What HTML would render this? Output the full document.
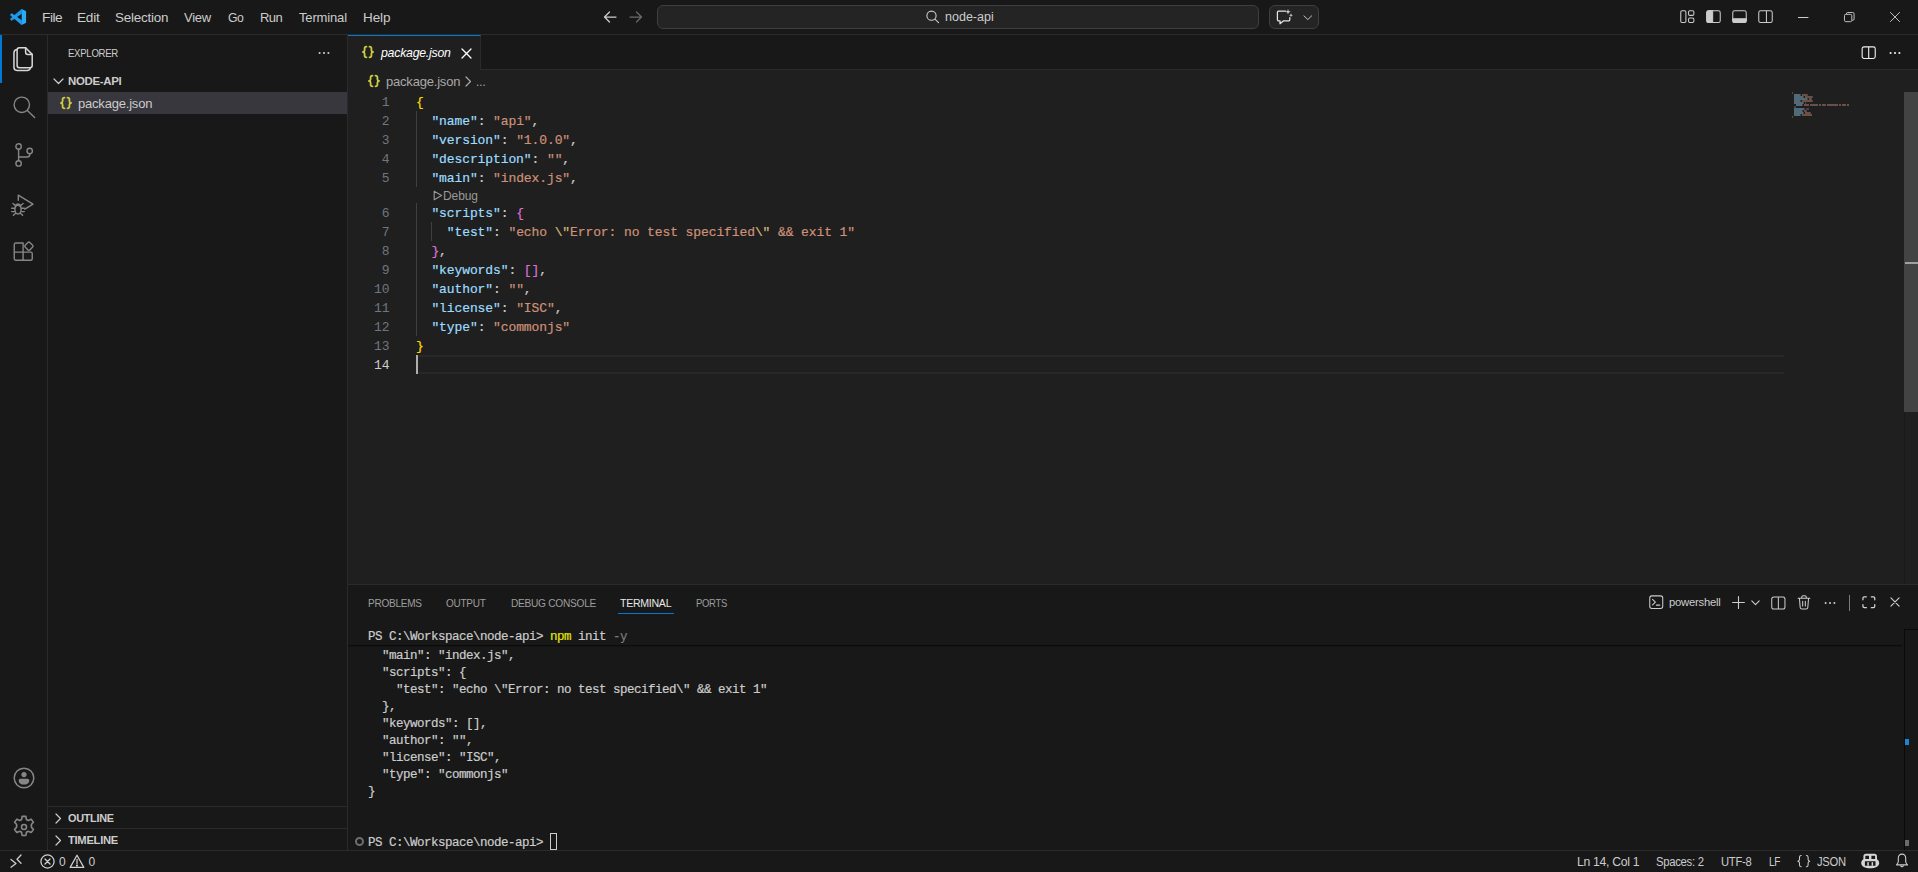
<!DOCTYPE html>
<html>
<head>
<meta charset="utf-8">
<title>package.json - node-api - Visual Studio Code</title>
<style>
*{box-sizing:border-box;margin:0;padding:0}
html,body{width:1918px;height:872px;overflow:hidden;background:#181818;}
body{font-family:"Liberation Sans",sans-serif;font-size:13px;color:#cccccc;position:relative;-webkit-font-smoothing:antialiased;}
.abs{position:absolute}
svg{display:block;overflow:visible}
.t{position:absolute;white-space:pre;line-height:1}

/* regions */
#titlebar{left:0;top:0;width:1918px;height:35px;background:#181818;border-bottom:1px solid #2b2b2b}
#activity{left:0;top:35px;width:48px;height:815px;background:#181818;border-right:1px solid #2b2b2b}
#sidebar{left:48px;top:35px;width:300px;height:815px;background:#181818;border-right:1px solid #2b2b2b}
#tabs{left:348px;top:35px;width:1570px;height:35px;background:#181818;border-bottom:1px solid #2b2b2b}
#editor{left:348px;top:70px;width:1570px;height:514px;background:#1f1f1f}
#panel{left:348px;top:584px;width:1570px;height:266px;background:#181818;border-top:1px solid #2b2b2b}
#status{left:0;top:850px;width:1918px;height:22px;background:#181818;border-top:1px solid #2b2b2b}

.menu{top:11px;font-size:13px;color:#cccccc}
/* code */
.mono{font-family:"Liberation Mono",monospace}
.code{font-family:"Liberation Mono",monospace;font-size:13px;letter-spacing:-0.1px;white-space:pre;line-height:19px;height:19px;position:absolute;left:416px;margin-top:1px;color:#cccccc}
.ln{font-family:"Liberation Mono",monospace;font-size:13px;letter-spacing:-0.1px;position:absolute;width:42px;left:347.5px;margin-top:1px;text-align:right;line-height:19px;height:19px;color:#6e7681}
.code,.term{-webkit-text-stroke:0.2px currentColor}
.k{color:#9cdcfe}.s{color:#ce9178}.y{color:#ffd700}.p{color:#da70d6}.e{color:#d7ba7d}
.term{font-family:"Liberation Mono",monospace;font-size:12.5px;letter-spacing:-0.5px;margin-top:2px;white-space:pre;line-height:17px;height:17px;position:absolute;left:368px;color:#cccccc}
</style>
</head>
<body>
<div id="titlebar" class="abs">
<!-- vscode logo -->
<svg class="abs" style="left:10px;top:9px" width="16.2" height="16" viewBox="0 0 16.2 16">
<path d="M11.800 -0.200L0.200 9.700Q-0.100 10.100 0.300 10.500L1.300 11.600Q1.700 11.900 2.100 11.600L11.800 4.700Z" fill="#1b95e8"/>
<path d="M11.800 16.200L0.200 6.300Q-0.100 5.900 0.300 5.500L1.300 4.400Q1.700 4.100 2.100 4.400L11.800 11.300Z" fill="#1f9cf0"/>
<path d="M11.700 0L15.700 1.900Q16.100 2.100 16.100 2.600V13.400Q16.100 13.900 15.700 14.100L11.700 16Z" fill="#2aaaf5"/>
</svg>
<span id="mFile" class="t menu" style="left:41.94px;letter-spacing:-0.45px;transform-origin:0 50%;transform:scaleX(1.0556)">File</span>
<span id="mEdit" class="t menu" style="left:76.95px;letter-spacing:-0.2px;transform-origin:0 50%;transform:scaleX(1.0476)">Edit</span>
<span id="mSel" class="t menu" style="left:114.96px;letter-spacing:-0.2px;transform-origin:0 50%;transform:scaleX(1.03)">Selection</span>
<span id="mView" class="t menu" style="left:184px;letter-spacing:-0.25px">View</span>
<span id="mGo" class="t menu" style="left:228.00px;letter-spacing:-0.5px;transform-origin:0 50%;transform:scaleX(0.9412)">Go</span>
<span id="mRun" class="t menu" style="left:260px;letter-spacing:-0.6px">Run</span>
<span id="mTerm" class="t menu" style="left:299px;letter-spacing:-0.15px">Terminal</span>
<span id="mHelp" class="t menu" style="left:362.96px;letter-spacing:-0.1px;transform-origin:0 50%;transform:scaleX(1.0400)">Help</span>
<!-- nav arrows -->
<svg class="abs" style="left:602px;top:9px" width="16" height="16" viewBox="0 0 16 16" fill="none" stroke="#cccccc" stroke-width="1.25" stroke-linecap="round" stroke-linejoin="round"><path d="M14 8H2.5M7.5 3L2.5 8l5 5"/></svg>
<svg class="abs" style="left:628px;top:9px" width="16" height="16" viewBox="0 0 16 16" fill="none" stroke="#6a6a6a" stroke-width="1.25" stroke-linecap="round" stroke-linejoin="round"><path d="M2 8h11.5M8.5 3l5 5-5 5"/></svg>
<!-- command center -->
<div class="abs" style="left:657px;top:5px;width:602px;height:24px;border:1px solid #3f3f3f;border-radius:6px;background:#242424"></div>
<svg class="abs" style="left:925px;top:9px" width="16" height="16" viewBox="0 0 16 16" fill="none" stroke="#cccccc" stroke-width="1.1" stroke-linecap="round"><circle cx="6.5" cy="6.7" r="4.6"/><path d="M9.9 10.1L13.6 13.6"/></svg>
<span id="cc" class="t" style="left:945.00px;top:11px;font-size:12px;color:#cccccc;letter-spacing:0px;transform-origin:0 50%;transform:scaleX(1.0435)">node-api</span>
<!-- copilot chat button -->
<div class="abs" style="left:1269px;top:5px;width:50px;height:24px;border:1px solid #3f3f3f;border-radius:6px;background:#242424"></div>
<svg class="abs" style="left:1276px;top:8px" width="18" height="18" viewBox="0 0 18 18" fill="none" stroke="#e4e4e4" stroke-width="1.25" stroke-linejoin="round" stroke-linecap="round"><path d="M9.5 3.2H2.6a1.2 1.2 0 0 0-1.2 1.2v7.2a1.2 1.2 0 0 0 1.2 1.2H4v3l3.6-3h5a1.2 1.2 0 0 0 1.2-1.2V9.6"/><path d="M12 1l.7 2 2 .7-2 .7-.7 2-.7-2-2-.7 2-.7z" fill="#d0d0d0" stroke="none"/><path d="M15 5.2l.55 1.45L17 7.2l-1.45.55L15 9.2l-.55-1.45L13 7.2l1.45-.55z" fill="#d0d0d0" stroke="none"/></svg>
<svg class="abs" style="left:1302.5px;top:14.5px" width="9.6" height="6" viewBox="0 0 11 7" fill="none" stroke="#cccccc" stroke-width="1.1" stroke-linecap="round" stroke-linejoin="round"><path d="M1 1l4.5 4.3L10 1"/></svg>
<!-- layout controls -->
<svg class="abs" style="left:1679.6px;top:9.3px" width="15.2" height="15.4" viewBox="0 0 16 16" fill="none" stroke="#cccccc" stroke-width="1.1"><rect x="0.8" y="1.8" width="5.4" height="12.4" rx="1.3"/><rect x="9" y="1.8" width="5.6" height="4.8" rx="1.3"/><rect x="9" y="9.4" width="5.6" height="4.8" rx="1.3"/></svg>
<svg class="abs" style="left:1705.6px;top:9.3px" width="15.2" height="15.4" viewBox="0 0 16 16" fill="none" stroke="#cccccc" stroke-width="1.1"><rect x="0.8" y="1.8" width="14.2" height="12.4" rx="2"/><path d="M0.8 3.8a2 2 0 0 1 2-2H7v12.4H2.8a2 2 0 0 1-2-2z" fill="#cccccc"/></svg>
<svg class="abs" style="left:1731.6px;top:9.3px" width="15.2" height="15.4" viewBox="0 0 16 16" fill="none" stroke="#cccccc" stroke-width="1.1"><rect x="0.8" y="1.8" width="14.2" height="12.4" rx="2"/><path d="M0.8 10.200H15v2a2 2 0 0 1-2 2H2.800a2 2 0 0 1-2-2z" fill="#cccccc"/></svg>
<svg class="abs" style="left:1757.6px;top:9.3px" width="15.2" height="15.4" viewBox="0 0 16 16" fill="none" stroke="#cccccc" stroke-width="1.1"><rect x="0.8" y="1.8" width="14.2" height="12.4" rx="2"/><path d="M8.9 1.8v12.4"/></svg>
<!-- window controls -->
<svg class="abs" style="left:1798px;top:12px" width="11" height="11" viewBox="0 0 11 11" fill="none" stroke="#cccccc" stroke-width="1"><path d="M0 5.5h10.4"/></svg>
<svg class="abs" style="left:1843.5px;top:12px" width="11" height="10.2" viewBox="0 0 12 11" fill="none" stroke="#cccccc" stroke-width="1"><rect x="0.5" y="2.5" width="8" height="8" rx="1.5"/><path d="M2.6 2.4V2a1.5 1.5 0 0 1 1.5-1.5H9.5A1.5 1.5 0 0 1 11 2v5.5A1.5 1.5 0 0 1 9.5 9H8.7"/></svg>
<svg class="abs" style="left:1890px;top:12px" width="10.2" height="10.2" viewBox="0 0 11 11" fill="none" stroke="#cccccc" stroke-width="1"><path d="M0.2 0.2l10.4 10.4M10.6 0.2L0.2 10.6"/></svg>
</div>
<div id="activity" class="abs">
<div class="abs" style="left:0;top:0;width:2px;height:48px;background:#0078d4"></div>
<!-- explorer (files) -->
<svg class="abs" style="left:12px;top:11px" width="24" height="26" viewBox="0 0 24 26" fill="none" stroke="#d7d7d7" stroke-width="1.5" stroke-linejoin="round" stroke-linecap="round"><path d="M7.300 1.800H13.600L20.200 8.400V19.500a2.200 2.200 0 0 1-2.200 2.200H7.300a2.200 2.200 0 0 1-2.200-2.200V4a2.200 2.200 0 0 1 2.200-2.200z"/><path d="M13.600 1.800V6.200a2.200 2.200 0 0 0 2.200 2.200H20.200"/><path d="M4.900 3.500C3.200 3.700 1.950 5 1.950 6.800V21.300a3.100 3.100 0 0 0 3.100 3.100H15.200c1.700 0 2.900-1 3.100-2.500"/></svg>
<!-- search -->
<svg class="abs" style="left:12px;top:60px" width="24" height="24" viewBox="0 0 24 24" fill="none" stroke="#868686" stroke-width="1.4" stroke-linecap="round"><circle cx="9.800" cy="9.800" r="7.700"/><path d="M15.400 15.400L22.600 22.400"/></svg>
<!-- source control -->
<svg class="abs" style="left:12px;top:106px" width="24" height="28" viewBox="0 0 24 28" fill="none" stroke="#868686" stroke-width="1.4" stroke-linecap="round"><circle cx="6.600" cy="5.500" r="2.700"/><circle cx="6.600" cy="22.400" r="2.700"/><circle cx="17.700" cy="10" r="2.700"/><path d="M6.600 8.200v11.500"/><path d="M17.700 12.700v.8a2.500 2.500 0 0 1-2.500 2.500H6.600"/></svg>
<!-- run and debug -->
<svg class="abs" style="left:10px;top:157px" width="26" height="26" viewBox="0 0 26 26" fill="none" stroke="#868686" stroke-width="1.400" stroke-linecap="round" stroke-linejoin="round"><path d="M8.3 8.2V3.2L23 12.2l-8.2 5"/><ellipse cx="8" cy="17.600" rx="3.100" ry="4.400"/><path d="M5.2 14.2a2.9 2.9 0 0 1 5.6 0"/><path d="M4.5 16.3H1.7M4.5 19.6H1.7M11.5 16.3h2.8M11.5 19.6h2.8M5 13.3L3 11.5M11 13.3l2-1.8M5.4 21.4L3.4 23.3M10.6 21.4l2 1.9"/></svg>
<!-- extensions -->
<svg class="abs" style="left:12px;top:204px" width="24" height="24" viewBox="0 0 24 24" fill="none" stroke="#868686" stroke-width="1.4" stroke-linejoin="round"><path d="M2.250 5.500a1.500 1.500 0 0 1 1.500-1.500H11.100V13.100H18.750a1.500 1.500 0 0 1 1.500 1.500V19.750a1.500 1.500 0 0 1-1.500 1.500H3.750a1.500 1.500 0 0 1-1.500-1.500z"/><path d="M2.250 13.100H11.100V21.250"/><rect x="13.600" y="3.900" width="6.600" height="6.600" rx="1.300" transform="rotate(45 16.900 7.200)"/></svg>
<!-- account -->
<svg class="abs" style="left:12px;top:731px" width="24" height="24" viewBox="0 0 24 24" fill="none" stroke="#868686" stroke-width="1.5"><circle cx="12" cy="12" r="9.8"/><circle cx="12" cy="8.6" r="2.6" fill="#868686" stroke="none"/><path d="M6.7 14.4c0-1 .8-1.7 1.7-1.7h7.2c1 0 1.7.8 1.7 1.7 0 2.6-2.3 4.2-5.3 4.2s-5.3-1.6-5.3-4.2z" fill="#868686" stroke="none"/></svg>
<!-- gear -->
<svg class="abs" style="left:11px;top:779px" width="26" height="26" viewBox="0 0 24 24" fill="none" stroke="#868686" stroke-width="1.5" stroke-linejoin="round"><circle cx="12" cy="12" r="2.3"/><path d="M10.3 2.2h3.4l.5 2.9 1.7.9 2.7-1.2 2.1 2.7-1.9 2.2v2.4l1.9 2.3-2.1 2.7-2.7-1.2-1.7 1-.5 2.9h-3.4l-.5-2.9-1.7-1-2.7 1.2-2.1-2.7 1.9-2.3v-2.4L3.300 7.500l2.100-2.700 2.700 1.200 1.700-.9z"/></svg>
</div>
<div id="sidebar" class="abs">
<span id="sExp" class="t" style="left:20.11px;top:13px;font-size:11px;color:#cccccc;letter-spacing:-0.35px;transform-origin:0 50%;transform:scaleX(0.8754)">EXPLORER</span>
<svg class="abs" style="left:270px;top:16px" width="12" height="4" viewBox="0 0 12 4" fill="#cccccc"><circle cx="1.6" cy="2" r="1.05"/><circle cx="6" cy="2" r="1.05"/><circle cx="10.4" cy="2" r="1.05"/></svg>
<!-- NODE-API header -->
<svg class="abs" style="left:5px;top:43px" width="11" height="7" viewBox="0 0 11 7" fill="none" stroke="#cccccc" stroke-width="1.2" stroke-linecap="round" stroke-linejoin="round"><path d="M1 1l4.5 4.5L10 1"/></svg>
<span id="sNode" class="t" style="left:20.00px;top:41px;font-size:11px;font-weight:700;color:#cccccc;letter-spacing:-0.3px;transform-origin:0 50%;transform:scaleX(1.0392)">NODE-API</span>
<!-- selected file row -->
<div class="abs" style="left:0;top:57px;width:299px;height:22px;background:#37373d"></div>
<svg class="abs" style="left:12.2px;top:62.3px" width="12" height="12" viewBox="0 0 12 12" fill="none" stroke="#cbcb41" stroke-width="1.8" stroke-linecap="round" stroke-linejoin="round"><path d="M4.5 0.700C3 0.700 2.600 1.300 2.600 2.500V4.200C2.600 5.200 2.200 5.800 1 6C2.200 6.200 2.600 6.800 2.600 7.800V9.500C2.600 10.700 3 11.300 4.500 11.300"/><path d="M7.500 0.700C9 0.700 9.400 1.300 9.400 2.500V4.200C9.400 5.200 9.800 5.800 11 6C9.800 6.200 9.400 6.800 9.400 7.800V9.500C9.400 10.700 9 11.300 7.500 11.300"/></svg>
<span id="sPkg" class="t" style="left:30px;top:62px;font-size:13px;color:#cccccc;letter-spacing:-0.2px">package.json</span>
<!-- outline / timeline -->
<div class="abs" style="left:0;top:771px;width:299px;height:1px;background:#2b2b2b"></div>
<svg class="abs" style="left:7px;top:777.5px" width="7" height="11" viewBox="0 0 7 11" fill="none" stroke="#cccccc" stroke-width="1.2" stroke-linecap="round" stroke-linejoin="round"><path d="M1 1l4.5 4.5L1 10"/></svg>
<span id="sOut" class="t" style="left:20.00px;top:778px;font-size:11px;font-weight:700;color:#cccccc;letter-spacing:-0.3px;transform-origin:0 50%;transform:scaleX(0.99)">OUTLINE</span>
<div class="abs" style="left:0;top:793px;width:299px;height:1px;background:#2b2b2b"></div>
<svg class="abs" style="left:7px;top:799.5px" width="7" height="11" viewBox="0 0 7 11" fill="none" stroke="#cccccc" stroke-width="1.2" stroke-linecap="round" stroke-linejoin="round"><path d="M1 1l4.5 4.5L1 10"/></svg>
<span id="sTime" class="t" style="left:20.00px;top:800px;font-size:11px;font-weight:700;color:#cccccc;letter-spacing:-0.3px;transform-origin:0 50%;transform:scaleX(1.0204)">TIMELINE</span>
</div>
<div id="tabs" class="abs">
<div class="abs" style="left:0;top:0;width:133px;height:35px;background:#1f1f1f;border-top:1px solid #0078d4;border-right:1px solid #2b2b2b"></div>
<svg class="abs" style="left:14.3px;top:11.1px" width="12" height="12" viewBox="0 0 12 12" fill="none" stroke="#cbcb41" stroke-width="1.8" stroke-linecap="round" stroke-linejoin="round"><path d="M4.5 0.700C3 0.700 2.600 1.300 2.600 2.500V4.200C2.600 5.200 2.200 5.800 1 6C2.200 6.200 2.600 6.800 2.600 7.800V9.500C2.600 10.700 3 11.300 4.500 11.300"/><path d="M7.500 0.700C9 0.700 9.400 1.300 9.400 2.500V4.200C9.400 5.200 9.800 5.800 11 6C9.800 6.200 9.400 6.800 9.400 7.800V9.500C9.400 10.700 9 11.300 7.500 11.300"/></svg>
<span id="tPkg" class="t" style="left:32.95px;top:11px;font-size:13px;font-style:italic;color:#ffffff;letter-spacing:-0.25px;transform-origin:0 50%;transform:scaleX(0.9467)">package.json</span>
<svg class="abs" style="left:113px;top:13px" width="11" height="11" viewBox="0 0 11 11" fill="none" stroke="#ffffff" stroke-width="1.3" stroke-linecap="round"><path d="M1 1l9 9M10 1l-9 9"/></svg>
<!-- editor actions -->
<svg class="abs" style="left:1513.2px;top:10.2px" width="15.4" height="15.4" viewBox="0 0 16 16" fill="none" stroke="#f0f0f0" stroke-width="1.15"><rect x="1.2" y="2" width="13.6" height="12" rx="2"/><path d="M8 2v12"/></svg>
<svg class="abs" style="left:1541px;top:16px" width="12" height="4" viewBox="0 0 12 4" fill="#f0f0f0"><circle cx="1.6" cy="2" r="1.05"/><circle cx="6" cy="2" r="1.05"/><circle cx="10.4" cy="2" r="1.05"/></svg>
</div>
<div id="editor" class="abs"></div>
<svg class="abs" style="left:368px;top:75.2px" width="12" height="12" viewBox="0 0 12 12" fill="none" stroke="#cbcb41" stroke-width="1.8" stroke-linecap="round" stroke-linejoin="round"><path d="M4.5 0.700C3 0.700 2.600 1.300 2.600 2.500V4.200C2.600 5.200 2.200 5.800 1 6C2.200 6.200 2.600 6.800 2.600 7.800V9.500C2.600 10.700 3 11.300 4.500 11.300"/><path d="M7.500 0.700C9 0.700 9.400 1.300 9.400 2.500V4.200C9.400 5.200 9.800 5.800 11 6C9.800 6.200 9.400 6.800 9.400 7.800V9.500C9.400 10.700 9 11.300 7.500 11.300"/></svg>
<span id="bPkg" class="t" style="left:386px;top:75px;font-size:13px;color:#a9a9a9;letter-spacing:-0.2px">package.json</span>
<svg class="abs" style="left:465px;top:76px" width="7" height="11" viewBox="0 0 7 11" fill="none" stroke="#a9a9a9" stroke-width="1.2" stroke-linecap="round" stroke-linejoin="round"><path d="M1 1l4.5 4.5L1 10"/></svg>
<span id="bDots" class="t" style="left:476.11px;top:75px;font-size:13px;color:#a9a9a9;letter-spacing:0px;transform-origin:0 50%;transform:scaleX(0.8889)">...</span>
<div class="abs" style="left:416px;top:355px;width:1368px;height:19px;border-top:2px solid #282828;border-bottom:2px solid #282828"></div>
<div class="abs" style="left:416px;top:111px;width:1px;height:76px;background:#404040"></div>
<div class="abs" style="left:416px;top:203px;width:1px;height:133px;background:#404040"></div>
<div class="abs" style="left:431px;top:222px;width:1px;height:19px;background:#404040"></div>
<div class="ln" style="top:92px">1</div>
<div class="code" style="top:92px"><span class="y">{</span></div>
<div class="ln" style="top:111px">2</div>
<div class="code" style="top:111px">  <span class="k">"name"</span>: <span class="s">"api"</span>,</div>
<div class="ln" style="top:130px">3</div>
<div class="code" style="top:130px">  <span class="k">"version"</span>: <span class="s">"1.0.0"</span>,</div>
<div class="ln" style="top:149px">4</div>
<div class="code" style="top:149px">  <span class="k">"description"</span>: <span class="s">""</span>,</div>
<div class="ln" style="top:168px">5</div>
<div class="code" style="top:168px">  <span class="k">"main"</span>: <span class="s">"index.js"</span>,</div>
<div class="ln" style="top:203px">6</div>
<div class="code" style="top:203px">  <span class="k">"scripts"</span>: <span class="p">{</span></div>
<div class="ln" style="top:222px">7</div>
<div class="code" style="top:222px">    <span class="k">"test"</span>: <span class="s">"echo <span class="e">\"</span>Error: no test specified<span class="e">\"</span> &amp;&amp; exit 1"</span></div>
<div class="ln" style="top:241px">8</div>
<div class="code" style="top:241px">  <span class="p">}</span>,</div>
<div class="ln" style="top:260px">9</div>
<div class="code" style="top:260px">  <span class="k">"keywords"</span>: <span class="p">[]</span>,</div>
<div class="ln" style="top:279px">10</div>
<div class="code" style="top:279px">  <span class="k">"author"</span>: <span class="s">""</span>,</div>
<div class="ln" style="top:298px">11</div>
<div class="code" style="top:298px">  <span class="k">"license"</span>: <span class="s">"ISC"</span>,</div>
<div class="ln" style="top:317px">12</div>
<div class="code" style="top:317px">  <span class="k">"type"</span>: <span class="s">"commonjs"</span></div>
<div class="ln" style="top:336px">13</div>
<div class="code" style="top:336px"><span class="y">}</span></div>
<div class="ln" style="top:355px;color:#cccccc">14</div>
<svg class="abs" style="left:432.5px;top:189.700px" width="10" height="11" viewBox="0 0 10 11" fill="none" stroke="#999999" stroke-width="1.1" stroke-linejoin="round"><path d="M1.2 1.2v8.6L8.6 5.5z"/></svg>
<span id="cDebug" class="t" style="left:443px;top:190px;font-size:12px;color:#999999;letter-spacing:-0.1px">Debug</span>
<div class="abs" style="left:416px;top:355px;width:2px;height:19px;background:#aeafad"></div>
<!-- minimap -->
<div class="abs" style="left:1792px;top:92px;width:1px;height:2px;background:rgba(255,215,0,0.28)"></div>
<div class="abs" style="left:1794px;top:94px;width:6px;height:2px;background:rgba(156,220,254,0.40)"></div>
<div class="abs" style="left:1800px;top:94px;width:1px;height:2px;background:rgba(204,204,204,0.22)"></div>
<div class="abs" style="left:1802px;top:94px;width:5px;height:2px;background:rgba(206,145,120,0.43)"></div>
<div class="abs" style="left:1807px;top:94px;width:1px;height:2px;background:rgba(204,204,204,0.22)"></div>
<div class="abs" style="left:1794px;top:96px;width:9px;height:2px;background:rgba(156,220,254,0.40)"></div>
<div class="abs" style="left:1803px;top:96px;width:1px;height:2px;background:rgba(204,204,204,0.22)"></div>
<div class="abs" style="left:1805px;top:96px;width:7px;height:2px;background:rgba(206,145,120,0.43)"></div>
<div class="abs" style="left:1812px;top:96px;width:1px;height:2px;background:rgba(204,204,204,0.22)"></div>
<div class="abs" style="left:1794px;top:98px;width:13px;height:2px;background:rgba(156,220,254,0.40)"></div>
<div class="abs" style="left:1807px;top:98px;width:1px;height:2px;background:rgba(204,204,204,0.22)"></div>
<div class="abs" style="left:1809px;top:98px;width:2px;height:2px;background:rgba(206,145,120,0.43)"></div>
<div class="abs" style="left:1811px;top:98px;width:1px;height:2px;background:rgba(204,204,204,0.22)"></div>
<div class="abs" style="left:1794px;top:100px;width:6px;height:2px;background:rgba(156,220,254,0.40)"></div>
<div class="abs" style="left:1800px;top:100px;width:1px;height:2px;background:rgba(204,204,204,0.22)"></div>
<div class="abs" style="left:1802px;top:100px;width:10px;height:2px;background:rgba(206,145,120,0.43)"></div>
<div class="abs" style="left:1812px;top:100px;width:1px;height:2px;background:rgba(204,204,204,0.22)"></div>
<div class="abs" style="left:1794px;top:102px;width:9px;height:2px;background:rgba(156,220,254,0.40)"></div>
<div class="abs" style="left:1803px;top:102px;width:1px;height:2px;background:rgba(204,204,204,0.22)"></div>
<div class="abs" style="left:1805px;top:102px;width:1px;height:2px;background:rgba(218,112,214,0.30)"></div>
<div class="abs" style="left:1796px;top:104px;width:6px;height:2px;background:rgba(156,220,254,0.40)"></div>
<div class="abs" style="left:1802px;top:104px;width:1px;height:2px;background:rgba(204,204,204,0.22)"></div>
<div class="abs" style="left:1804px;top:104px;width:5px;height:2px;background:rgba(206,145,120,0.43)"></div>
<div class="abs" style="left:1810px;top:104px;width:8px;height:2px;background:rgba(206,145,120,0.43)"></div>
<div class="abs" style="left:1819px;top:104px;width:2px;height:2px;background:rgba(206,145,120,0.43)"></div>
<div class="abs" style="left:1822px;top:104px;width:4px;height:2px;background:rgba(206,145,120,0.43)"></div>
<div class="abs" style="left:1827px;top:104px;width:11px;height:2px;background:rgba(206,145,120,0.43)"></div>
<div class="abs" style="left:1839px;top:104px;width:2px;height:2px;background:rgba(206,145,120,0.43)"></div>
<div class="abs" style="left:1842px;top:104px;width:4px;height:2px;background:rgba(206,145,120,0.43)"></div>
<div class="abs" style="left:1847px;top:104px;width:2px;height:2px;background:rgba(206,145,120,0.43)"></div>
<div class="abs" style="left:1794px;top:106px;width:1px;height:2px;background:rgba(218,112,214,0.30)"></div>
<div class="abs" style="left:1795px;top:106px;width:1px;height:2px;background:rgba(204,204,204,0.22)"></div>
<div class="abs" style="left:1794px;top:108px;width:10px;height:2px;background:rgba(156,220,254,0.40)"></div>
<div class="abs" style="left:1804px;top:108px;width:1px;height:2px;background:rgba(204,204,204,0.22)"></div>
<div class="abs" style="left:1806px;top:108px;width:2px;height:2px;background:rgba(218,112,214,0.30)"></div>
<div class="abs" style="left:1808px;top:108px;width:1px;height:2px;background:rgba(204,204,204,0.22)"></div>
<div class="abs" style="left:1794px;top:110px;width:8px;height:2px;background:rgba(156,220,254,0.40)"></div>
<div class="abs" style="left:1802px;top:110px;width:1px;height:2px;background:rgba(204,204,204,0.22)"></div>
<div class="abs" style="left:1804px;top:110px;width:2px;height:2px;background:rgba(206,145,120,0.43)"></div>
<div class="abs" style="left:1806px;top:110px;width:1px;height:2px;background:rgba(204,204,204,0.22)"></div>
<div class="abs" style="left:1794px;top:112px;width:9px;height:2px;background:rgba(156,220,254,0.40)"></div>
<div class="abs" style="left:1803px;top:112px;width:1px;height:2px;background:rgba(204,204,204,0.22)"></div>
<div class="abs" style="left:1805px;top:112px;width:5px;height:2px;background:rgba(206,145,120,0.43)"></div>
<div class="abs" style="left:1810px;top:112px;width:1px;height:2px;background:rgba(204,204,204,0.22)"></div>
<div class="abs" style="left:1794px;top:114px;width:6px;height:2px;background:rgba(156,220,254,0.40)"></div>
<div class="abs" style="left:1800px;top:114px;width:1px;height:2px;background:rgba(204,204,204,0.22)"></div>
<div class="abs" style="left:1802px;top:114px;width:10px;height:2px;background:rgba(206,145,120,0.43)"></div>
<div class="abs" style="left:1792px;top:116px;width:1px;height:2px;background:rgba(255,215,0,0.28)"></div>
<div class="abs" style="left:1904px;top:92px;width:14px;height:320px;background:#434343"></div>
<div class="abs" style="left:1904px;top:412px;width:1px;height:172px;background:#191919"></div>
<div class="abs" style="left:1905px;top:262px;width:13px;height:2px;background:#a0a0a0"></div>
<div id="panel" class="abs"></div>
<span id="pProb" class="t" style="left:368.07px;top:598px;font-size:11px;color:#9d9d9d;letter-spacing:-0.3px;transform-origin:0 50%;transform:scaleX(0.9141)">PROBLEMS</span>
<span id="pOut" class="t" style="left:446.00px;top:598px;font-size:11px;color:#9d9d9d;letter-spacing:-0.3px;transform-origin:0 50%;transform:scaleX(0.9091)">OUTPUT</span>
<span id="pDbg" class="t" style="left:511.07px;top:598px;font-size:11px;color:#9d9d9d;letter-spacing:-0.3px;transform-origin:0 50%;transform:scaleX(0.9232)">DEBUG CONSOLE</span>
<span id="pTerm" class="t" style="left:620.00px;top:598px;font-size:11px;color:#e7e7e7;letter-spacing:-0.3px;transform-origin:0 50%;transform:scaleX(0.9630)">TERMINAL</span>
<span id="pPorts" class="t" style="left:696.11px;top:598px;font-size:11px;color:#9d9d9d;letter-spacing:-0.3px;transform-origin:0 50%;transform:scaleX(0.8580)">PORTS</span>
<div class="abs" style="left:618px;top:613px;width:56px;height:1px;background:#0078d4"></div>
<svg class="abs" style="left:1649px;top:595px" width="14.5" height="14.3" viewBox="0 0 15 15" fill="none" stroke="#cccccc" stroke-width="1.1" stroke-linecap="round" stroke-linejoin="round"><rect x="0.7" y="0.9" width="13.6" height="13.2" rx="2.2"/><path d="M3.6 4.6l3 2.9-3 2.9M7.6 10.6h3.6"/></svg>
<span id="pPwsh" class="t" style="left:1669.00px;top:597px;font-size:11.5px;color:#cccccc;letter-spacing:-0.25px;transform-origin:0 50%;transform:scaleX(0.9808)">powershell</span>
<svg class="abs" style="left:1732px;top:596px" width="13" height="13" viewBox="0 0 13 13" fill="none" stroke="#cccccc" stroke-width="1.1" stroke-linecap="round"><path d="M6.5 0.6v11.8M0.6 6.5h11.8"/></svg>
<svg class="abs" style="left:1751px;top:600px" width="9" height="6" viewBox="0 0 9 6" fill="none" stroke="#cccccc" stroke-width="1.1" stroke-linecap="round" stroke-linejoin="round"><path d="M0.8 0.9l3.7 3.7L8.2 0.9"/></svg>
<svg class="abs" style="left:1770.5px;top:596px" width="14.9" height="14" viewBox="0 0 16 15" fill="none" stroke="#cccccc" stroke-width="1.1"><rect x="0.8" y="1" width="14.2" height="13" rx="2.2"/><path d="M7.9 1v13"/></svg>
<svg class="abs" style="left:1797px;top:595px" width="14" height="15.2" viewBox="0 0 14 16" fill="none" stroke="#cccccc" stroke-width="1.1" stroke-linecap="round" stroke-linejoin="round"><path d="M0.8 3.4h12.4M4.6 3.2V2.4a1.6 1.6 0 0 1 1.6-1.600h1.600a1.600 1.600 0 0 1 1.600 1.600v.8M2.2 3.600l.8 9.600a1.800 1.800 0 0 0 1.800 1.600h4.400a1.800 1.800 0 0 0 1.800-1.600l.8-9.600M5.600 6.600v5M8.400 6.600v5"/></svg>
<svg class="abs" style="left:1824px;top:601px" width="12" height="4" viewBox="0 0 12 4" fill="#cccccc"><circle cx="1.6" cy="2" r="1"/><circle cx="6" cy="2" r="1"/><circle cx="10.4" cy="2" r="1"/></svg>
<div class="abs" style="left:1849px;top:595px;width:1px;height:16px;background:#7a7a7a"></div>
<svg class="abs" style="left:1862.3px;top:595.8px" width="13.7" height="12.4" viewBox="0 0 14 13" fill="none" stroke="#d4d4d4" stroke-width="1.3" stroke-linecap="round" stroke-linejoin="round"><path d="M0.8 4V2.2a1.400 1.400 0 0 1 1.400-1.400H4.400M9.600 0.800h2.200a1.400 1.400 0 0 1 1.400 1.400V4M13.200 9v1.800a1.400 1.400 0 0 1-1.400 1.400H9.600M4.400 12.200H2.200a1.400 1.400 0 0 1-1.400-1.400V9"/></svg>
<svg class="abs" style="left:1890px;top:597.4px" width="10" height="10" viewBox="0 0 11 11" fill="none" stroke="#cccccc" stroke-width="1.3" stroke-linecap="round"><path d="M1 1l9 9M10 1l-9 9"/></svg>
<div class="term" style="top:627px">PS C:\Workspace\node-api&gt; <span style="color:#e5e510">npm</span> init <span style="color:#7a7a7a">-y</span></div>
<div class="abs" style="left:348px;top:645px;width:1554px;height:1px;background:#0c0c0c"></div>
<div class="abs" style="left:348px;top:646px;width:1554px;height:1px;background:#141414"></div>
<div class="term" style="top:646px">  "main": "index.js",</div>
<div class="term" style="top:663px">  "scripts": {</div>
<div class="term" style="top:680px">    "test": "echo \"Error: no test specified\" &amp;&amp; exit 1"</div>
<div class="term" style="top:697px">  },</div>
<div class="term" style="top:714px">  "keywords": [],</div>
<div class="term" style="top:731px">  "author": "",</div>
<div class="term" style="top:748px">  "license": "ISC",</div>
<div class="term" style="top:765px">  "type": "commonjs"</div>
<div class="term" style="top:782px">}</div>
<div class="term" style="top:833px">PS C:\Workspace\node-api&gt; </div>
<div class="abs" style="left:550px;top:833px;width:7px;height:17px;border:1px solid #cccccc"></div>
<div class="abs" style="left:354.5px;top:836.5px;width:9px;height:9px;border:2.3px solid #6e6e6e;border-radius:50%"></div>
<div class="abs" style="left:1904px;top:629px;width:1px;height:221px;background:#0a0a0a"></div>
<div class="abs" style="left:1904px;top:629px;width:14px;height:1px;background:#0a0a0a"></div>
<div class="abs" style="left:1905px;top:739px;width:4px;height:6px;background:#1a85d6"></div>
<div class="abs" style="left:1905px;top:840px;width:4px;height:6px;background:#6b6b6b"></div>
<div id="status" class="abs"></div>
<svg class="abs" style="left:10px;top:854px" width="12" height="14" viewBox="0 0 12 14" fill="none" stroke="#cccccc" stroke-width="1.300" stroke-linecap="round" stroke-linejoin="round"><path d="M1 5.400L6 9.400L1 13.200M11 1L7 5.200L11 9.200"/></svg>
<svg class="abs" style="left:40px;top:854px" width="15" height="15" viewBox="0 0 15 15" fill="none" stroke="#d0d0d0" stroke-width="1.25" stroke-linecap="round"><circle cx="7.500" cy="7.500" r="6.600"/><path d="M5 5l5 5M10 5l-5 5"/></svg>
<span id="st0a" class="t" style="left:59px;top:856px;font-size:12px;color:#cccccc;letter-spacing:0px">0</span>
<svg class="abs" style="left:69px;top:854px" width="16" height="15" viewBox="0 0 16 15" fill="none" stroke="#d0d0d0" stroke-width="1.25" stroke-linecap="round" stroke-linejoin="round"><path d="M8 1.200L14.800 13.400H1.200z"/><path d="M8 5.400v4.200"/><circle cx="8" cy="11.500" r="0.500" fill="#cccccc"/></svg>
<span id="st0b" class="t" style="left:88.5px;top:856px;font-size:12px;color:#cccccc;letter-spacing:0px">0</span>
<span id="stLn" class="t" style="left:1576.98px;top:856px;font-size:12px;color:#cccccc;letter-spacing:-0.3px;transform-origin:0 50%;transform:scaleX(1.0167)">Ln 14, Col 1</span>
<span id="stSp" class="t" style="left:1656.00px;top:856px;font-size:12px;color:#cccccc;letter-spacing:-0.3px;transform-origin:0 50%;transform:scaleX(0.9412)">Spaces: 2</span>
<span id="stUtf" class="t" style="left:1721.03px;top:856px;font-size:12px;color:#cccccc;letter-spacing:-0.3px;transform-origin:0 50%;transform:scaleX(0.9385)">UTF-8</span>
<span id="stLf" class="t" style="left:1769.07px;top:856px;font-size:12px;color:#cccccc;letter-spacing:-0.3px;transform-origin:0 50%;transform:scaleX(0.8403)">LF</span>
<svg class="abs" style="left:1796.5px;top:854.8px" width="13.600" height="12.400" viewBox="0 0 13.600 12.400" fill="none" stroke="#cccccc" stroke-width="1.050" stroke-linecap="round" stroke-linejoin="round"><path d="M4.200 0.600C2.900 0.600 2.500 1.200 2.500 2.300V4.500C2.500 5.500 2.100 6 0.800 6.200C2.100 6.400 2.500 6.900 2.500 7.900V10.100C2.500 11.200 2.900 11.800 4.200 11.800"/><path d="M9.400 0.600C10.700 0.600 11.100 1.200 11.100 2.300V4.500C11.100 5.500 11.500 6 12.800 6.200C11.500 6.400 11.100 6.900 11.100 7.900V10.100C11.100 11.200 10.700 11.800 9.400 11.800"/></svg>
<span id="stJson" class="t" style="left:1817.00px;top:856px;font-size:12px;color:#cccccc;letter-spacing:-0.3px;transform-origin:0 50%;transform:scaleX(0.9355)">JSON</span>
<svg class="abs" style="left:1861px;top:853px" width="18.4" height="16" viewBox="0 0 18.4 16"><path fill="#d6d6d6" fill-rule="evenodd" d="M5 0.800H13.400A2.600 2.600 0 0 1 16 3.400V6.300C17.500 7.200 18.200 8.500 18.200 10.200C18.200 13.300 14.200 15.300 9.200 15.300S0.200 13.300 0.200 10.200C0.200 8.500 0.900 7.200 2.400 6.300V3.400A2.600 2.600 0 0 1 5 0.800ZM4.300 2.700H8V6.100H4.300Z M10.400 2.700H14.100V6.100H10.400ZM3.900 8.300H14.500V12.700H3.900Z"/><rect x="6.300" y="9.200" width="1.500" height="3.500" fill="#d6d6d6"/><rect x="10.600" y="9.200" width="1.500" height="3.500" fill="#d6d6d6"/></svg>
<svg class="abs" style="left:1895px;top:853.2px" width="14" height="16" viewBox="0 0 14 16" fill="none" stroke="#cccccc" stroke-width="1.100" stroke-linejoin="round" stroke-linecap="round"><path d="M7 1.100C4.800 1.100 3.300 2.800 3.300 5V8.500C3.300 9.800 2.600 10.800 1.500 11.900H12.500C11.400 10.800 10.700 9.800 10.700 8.500V5C10.700 2.800 9.200 1.100 7 1.100Z"/><path d="M5.700 12.700a1.400 1.400 0 0 0 2.600 0"/></svg>
</body>
</html>
